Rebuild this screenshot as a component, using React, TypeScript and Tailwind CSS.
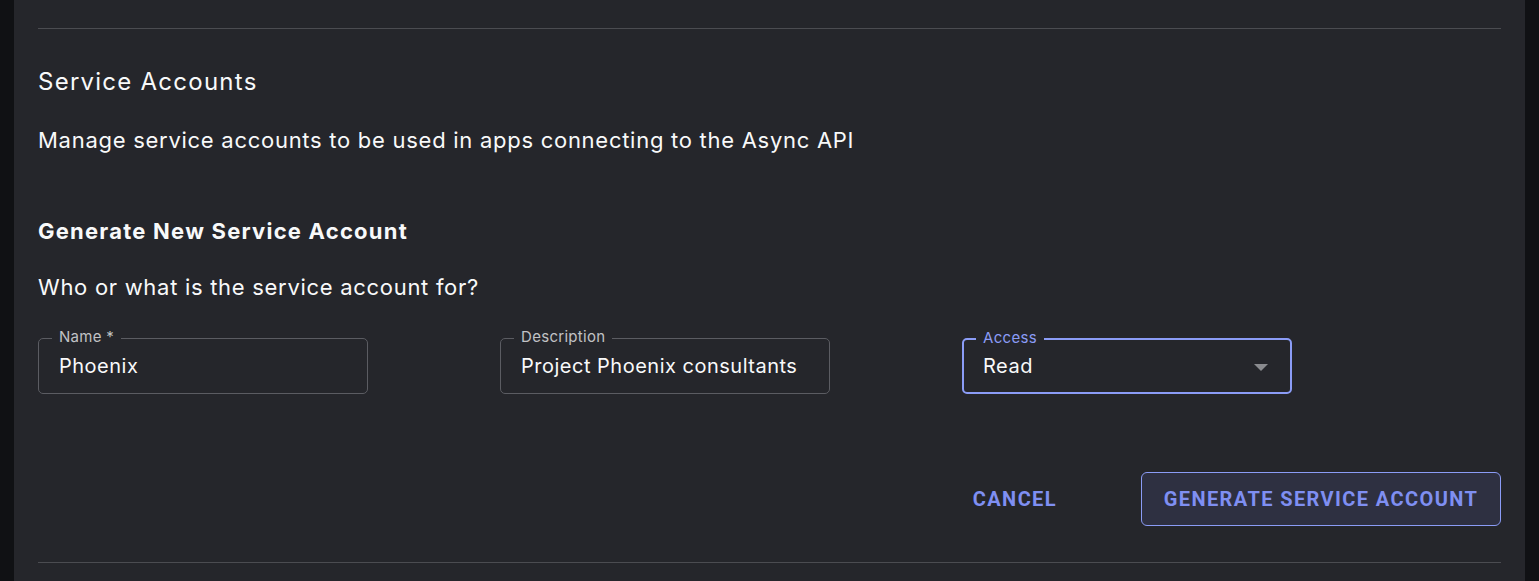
import { ReactNode } from "react";

const Field = ({
  label,
  value,
  focused,
  select,
}: {
  label: string;
  value: string;
  focused?: boolean;
  select?: boolean;
}) => {
  return (
    <div
      className={`relative w-[330px] h-[56px] rounded-[5px] flex items-center pr-[22px] ${
        focused ? "border-2 border-[#8b9cf6] pl-[19px]" : "border border-[#5b5c62] pl-[20px]"
      }`}
    >
      <span
        className={`absolute top-[-11px] px-[7px] bg-[#25262b] text-[15px] leading-[18px] tracking-[0.02em] ${
          focused ? "text-[#8b9cf6] left-[12px]" : "text-[#c1c2c5] left-[13px]"
        }`}
      >
        {label}
      </span>
      <span className="flex-1 text-[20px] tracking-[0.025em] text-[#f8f9fa]">{value}</span>
      {select && (
        <svg width="14" height="7" viewBox="0 0 14 7" className="mt-[2px]">
          <path d="M0 0 L14 0 L7 7 Z" fill="#8a8b8f" />
        </svg>
      )}
    </div>
  );
};

const Divider = ({ className }: { className?: string }) => (
  <div className={`h-px bg-[#4b4c51] ${className ?? ""}`} />
);

const Button = ({ children, outlined }: { children: ReactNode; outlined?: boolean }) => (
  <button
    className={`h-[54px] rounded-[6px] font-['Roboto',sans-serif] font-bold text-[20px] tracking-[0.07em] text-[#7f8ff2] ${
      outlined ? "w-[360px] border border-[#8b9cf6] bg-[#2e3041]" : "px-[16px]"
    }`}
  >
    {children}
  </button>
);

export default function App() {
  return (
    <div className="flex h-[581px] bg-[#101114] font-['Inter',sans-serif] overflow-hidden">
      <div className="w-[14px]" />
      <div className="flex-1 bg-[#25262b] px-6 pt-[28px] text-[#f8f9fa]">
        <Divider />
        <h2 className="mt-[37px] text-[24px] leading-8 tracking-[0.052em]">Service Accounts</h2>
        <p className="mt-[28px] text-[22px] leading-7 tracking-[0.033em]">
          Manage service accounts to be used in apps connecting to the Async API
        </p>
        <h3 className="mt-[63px] text-[22px] leading-7 font-bold tracking-[0.056em]">
          Generate New Service Account
        </h3>
        <p className="mt-[28px] text-[22px] leading-7 tracking-[0.032em]">
          Who or what is the service account for?
        </p>
        <div className="mt-[37px] flex gap-[132px]">
          <Field label="Name *" value="Phoenix" />
          <Field label="Description" value="Project Phoenix consultants" />
          <Field label="Access" value="Read" focused select />
        </div>
        <div className="mt-[78px] flex justify-end items-center gap-[68px]">
          <Button>CANCEL</Button>
          <Button outlined>GENERATE SERVICE ACCOUNT</Button>
        </div>
        <Divider className="mt-[36px]" />
      </div>
      <div className="w-[14px]" />
    </div>
  );
}
